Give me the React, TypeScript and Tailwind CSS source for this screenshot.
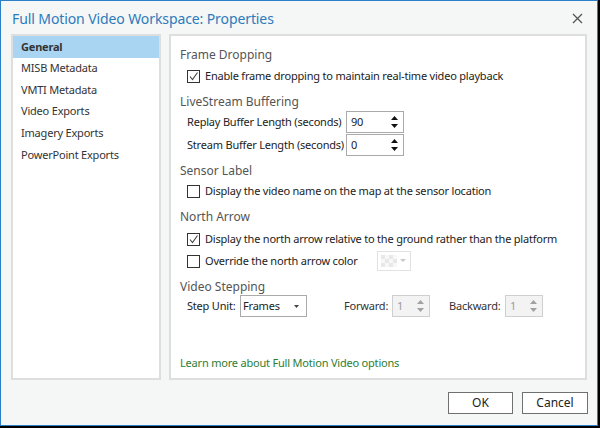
import React from "react";

const font = { fontFamily: '"Noto Sans", "Open Sans", sans-serif' };

function Check({ checked }: { checked?: boolean }) {
  return (
    <span className="w-[13px] h-[13px] border border-[#333] bg-white flex items-center justify-center shrink-0">
      {checked && (
        <svg width="11" height="11" viewBox="0 0 11 11">
          <path d="M2 5.5 L4.5 8.5 L9.5 1.5" fill="none" stroke="#444" strokeWidth="1.1" />
        </svg>
      )}
    </span>
  );
}

function Spin({ value, disabled, w }: { value: string; disabled?: boolean; w: string }) {
  const c = disabled ? "#a0a0a0" : "#111";
  return (
    <div
      className={`${w} h-[22px] border flex items-center justify-between pl-[4px] pr-[4px] shrink-0 ${
        disabled ? "border-[#cfcfcf] bg-[#f3f3f3] text-[#9a9a9a]" : "border-[#aaaaaa] bg-white text-[#222]"
      }`}
    >
      <span>{value}</span>
      <svg width="9" height="14" viewBox="0 0 9 14">
        <path d="M4.5 1 L8 5 L1 5 Z" fill={c} />
        <path d="M4.5 13 L8 9 L1 9 Z" fill={c} />
      </svg>
    </div>
  );
}

export default function App() {
  const items = ["General", "MISB Metadata", "VMTI Metadata", "Video Exports", "Imagery Exports", "PowerPoint Exports"];
  return (
    <div className="w-[600px] h-[428px] bg-black pr-[2px] pb-[2px]" style={font}>
      <div className="w-full h-full bg-[#f5f6f6] border border-[#2a7fc8] flex flex-col text-[11px] tracking-[-0.2px] text-[#222] whitespace-nowrap">
        <div className="h-[33px] flex items-center justify-between pl-[11px] pr-[10px] pt-[2px]">
          <span className="text-[14px] text-[#2b7bbd] tracking-[-0.1px]">Full Motion Video Workspace: Properties</span>
          <svg width="11" height="11" viewBox="0 0 11 11" className="mr-[4px]">
            <path d="M1 1 L10 10 M10 1 L1 10" stroke="#555" strokeWidth="1.3" />
          </svg>
        </div>
        <div className="flex gap-[8px] pl-[10px] pr-[10px] h-[346px]">
          <div className="w-[150px] h-full bg-white border-2 border-[#dedede]">
            {items.map((it, i) => (
              <div
                key={it}
                className={`h-[21.6px] flex items-center pl-[8px] ${
                  i === 0 ? "bg-[#a9d5f3] font-bold text-[#333]" : "text-[#333]"
                }`}
              >
                {it}
              </div>
            ))}
          </div>
          <div className="flex-1 h-full bg-white border-2 border-[#dedede] pl-[9px] pt-[9px] flex flex-col text-[#222]">
            <div className="text-[12px] tracking-normal text-[#555] h-[20px] flex items-center">Frame Dropping</div>
            <div className="flex items-center gap-[5px] pl-[7px] h-[22px]">
              <Check checked />
              <span>Enable frame dropping to maintain real-time video playback</span>
            </div>
            <div className="text-[12px] leading-[16px] tracking-normal text-[#555] h-[24px] flex items-end pb-[1px]">LiveStream Buffering</div>
            <div className="flex items-center pl-[7px] h-[22px]">
              <span className="w-[159px]">Replay Buffer Length (seconds)</span>
              <Spin value="90" w="w-[58px]" />
            </div>
            <div className="flex items-center pl-[7px] h-[22px] mt-[1px]">
              <span className="w-[159px]">Stream Buffer Length (seconds)</span>
              <Spin value="0" w="w-[58px]" />
            </div>
            <div className="text-[12px] leading-[16px] tracking-normal text-[#555] h-[24px] flex items-end pb-[1px]">Sensor Label</div>
            <div className="flex items-center gap-[5px] pl-[7px] h-[22px]">
              <Check />
              <span>Display the video name on the map at the sensor location</span>
            </div>
            <div className="text-[12px] leading-[16px] tracking-normal text-[#555] h-[26px] flex items-end pb-[3px]">North Arrow</div>
            <div className="flex items-center gap-[5px] pl-[7px] h-[22px]">
              <Check checked />
              <span>Display the north arrow relative to the ground rather than the platform</span>
            </div>
            <div className="flex items-center gap-[5px] pl-[7px] h-[22px]">
              <Check />
              <span className="w-[167px]">Override the north arrow color</span>
              <div className="w-[34px] h-[20px] border border-[#e2e2e2] flex items-center pl-[3px] gap-[3px]">
                <div className="w-[16px] h-[12px] grid grid-cols-4 grid-rows-3">
                  {Array.from({ length: 12 }).map((_, k) => (
                    <div
                      key={k}
                      className={(Math.floor(k / 4) + (k % 4)) % 2 === 0 ? "bg-[#e8e8e8]" : "bg-[#f8f8f8]"}
                    />
                  ))}
                </div>
                <svg width="6" height="4" viewBox="0 0 6 4">
                  <path d="M0 0 L6 0 L3 3 Z" fill="#c8c8c8" />
                </svg>
              </div>
            </div>
            <div className="text-[12px] leading-[16px] tracking-normal text-[#555] h-[23px] flex items-end">Video Stepping</div>
            <div className="flex items-center pl-[7px] h-[22px]">
              <span className="w-[53px]">Step Unit:</span>
              <div className="w-[67px] h-[22px] border border-[#aaaaaa] bg-white flex items-center justify-between pl-[2px] pr-[7px]">
                <span>Frames</span>
                <svg width="5" height="3" viewBox="0 0 5 3">
                  <path d="M0 0 L5 0 L2.5 3 Z" fill="#444" />
                </svg>
              </div>
              <span className="ml-[37px] w-[48px] text-[#333]">Forward:</span>
              <Spin value="1" disabled w="w-[38px]" />
              <span className="ml-[19px] w-[56px] text-[#333]">Backward:</span>
              <Spin value="1" disabled w="w-[38px]" />
            </div>
            <div className="flex-1" />
            <div className="text-[#2e7d32] pb-[7px]">Learn more about Full Motion Video options</div>
          </div>
        </div>
        <div className="flex-1 flex items-center justify-end gap-[9px] pr-[9px] pt-[1px]">
          <button className="w-[65px] h-[22px] border border-[#707070] bg-white text-[12px] tracking-normal text-[#222]">OK</button>
          <button className="w-[66px] h-[22px] border border-[#707070] bg-white text-[12px] tracking-normal text-[#222]">Cancel</button>
        </div>
      </div>
    </div>
  );
}
